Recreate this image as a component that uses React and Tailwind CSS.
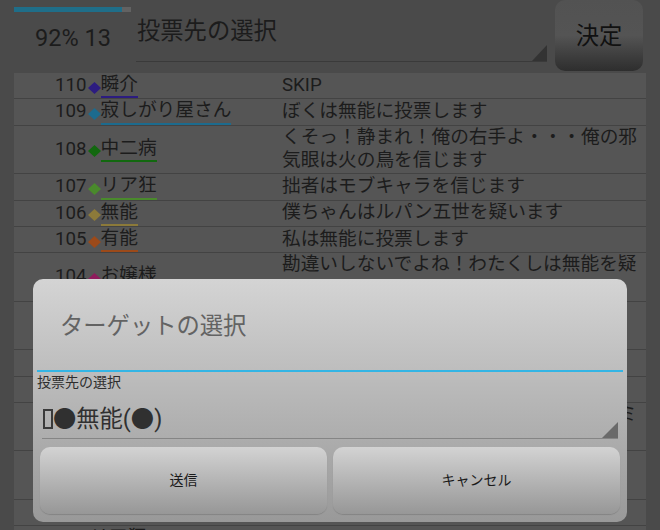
import React from "react";

const rows = [
  { n: 110, name: "瞬介", c: "#2c1c80", u: "border-[#2c1c80]", lines: ["SKIP"] },
  { n: 109, name: "寂しがり屋さん", c: "#1c6b8e", u: "border-[#1c6b8e]", lines: ["ぼくは無能に投票します"] },
  {
    n: 108,
    name: "中二病",
    c: "#12680f",
    u: "border-[#12680f]",
    lines: ["くそっ！静まれ！俺の右手よ・・・俺の邪", "気眼は火の鳥を信じます"],
  },
  { n: 107, name: "リア狂", c: "#4a8a2c", u: "border-[#4a8a2c]", lines: ["拙者はモブキャラを信じます"] },
  { n: 106, name: "無能", c: "#8c7a3a", u: "border-[#8c7a3a]", lines: ["僕ちゃんはルパン五世を疑います"] },
  { n: 105, name: "有能", c: "#9c4a1a", u: "border-[#9c4a1a]", lines: ["私は無能に投票します"] },
  {
    n: 104,
    name: "お嬢様",
    c: "#8e1c5c",
    u: "border-[#8e1c5c]",
    lines: ["勘違いしないでよね！わたくしは無能を疑", "っているわけじゃないんだからね！"],
  },
  {
    n: 103,
    name: "ルパン五世",
    c: "#6a2a8a",
    u: "border-[#6a2a8a]",
    lines: ["ふっふっふ、このルパン五世が華麗に", "有能を頂いていくぜ"],
  },
  { n: 102, name: "モブキャラ", c: "#5a5a1a", u: "border-[#5a5a1a]", lines: ["自分は寂しがり屋さんを信じます"] },
  { n: 101, name: "火の鳥", c: "#9a2a1a", u: "border-[#9a2a1a]", lines: ["私は中二病を疑います"] },
  {
    n: 100,
    name: "瞬介",
    c: "#2c1c80",
    u: "border-[#2c1c80]",
    lines: ["占いの結果は村人でした。皆さん信じてミ", "ンナで頑張りましょう"],
  },
  {
    n: 99,
    name: "寂しがり屋さん",
    c: "#1c6b8e",
    u: "border-[#1c6b8e]",
    lines: ["僕の推理では無能さんがとても怪しいよ、", "だから投票します"],
  },
  { n: null, name: "", c: "", u: "", lines: ["夜が明けました"] },
  { n: 97, name: "リア狂", c: "#4a8a2c", u: "border-[#4a8a2c]", lines: ["SKIP"] },
];

function Diamond({ color }) {
  return (
    <svg width="13" height="12" viewBox="0 0 13 12" className="ml-[1px] mt-[4px] shrink-0">
      <polygon points="6.5,0 13,6 6.5,12 0,6" fill={color} />
    </svg>
  );
}

function LogRow({ row }) {
  return (
    <div className="flex items-center border-b border-[#434343]">
      <div className="flex h-[25.4px] w-[268px] shrink-0 items-center pl-[41px] text-[18.7px]">
        {row.n && (
          <>
            <span className="leading-[23.4px]">{row.n}</span>
            <Diamond color={row.c} />
            <span className={`whitespace-nowrap border-b-2 leading-[23.4px] ${row.u}`}>{row.name}</span>
          </>
        )}
      </div>
      <div className="whitespace-nowrap text-[18.7px] leading-[23.7px]">
        {row.lines.map((l, i) => (
          <div key={i}>{l}</div>
        ))}
      </div>
    </div>
  );
}

export default function App() {
  return (
    <div className="relative h-[530px] w-[660px] overflow-hidden bg-[#4a4a4a] font-[Roboto,'Noto_Sans_CJK_JP',sans-serif] text-[#1c1c1c]">
      {/* header */}
      <div className="mx-[14px] flex h-[73px]">
        <div className="w-[122px] shrink-0">
          <div className="mt-[7px] h-[5px] w-[117px] bg-[#626262]">
            <div className="h-full w-[92%] bg-[#1f6e89]" />
          </div>
          <div className="mt-[12px] pl-[21px] text-[23.5px] leading-[28px]">92% 13</div>
        </div>
        <div className="relative mt-[14px] h-[48px] w-[411px] shrink-0 border-b border-[#3a3a3a]">
          <div className="pl-[1px] text-[23.3px] leading-[34px]">投票先の選択</div>
          <svg width="15" height="16" viewBox="0 0 15 16" className="absolute bottom-0 right-0">
            <polygon points="15,0 15,16 0,16" fill="#333333" />
          </svg>
        </div>
        <button className="ml-[8px] flex h-[71px] w-[88px] shrink-0 items-center justify-center rounded-[10px] bg-linear-to-b from-[#525252] via-[#545454] to-[#2e2e2e] text-[23.3px] leading-[34px] text-[#111111]">
          決定
        </button>
      </div>

      {/* log table */}
      <div className="mx-[14px] bg-[#555555]">
        {rows.map((r, i) => (
          <LogRow key={i} row={r} />
        ))}
      </div>

      {/* dialog */}
      <div className="absolute left-[33px] top-[279px] flex h-[243px] w-[594px] flex-col rounded-[10px] bg-linear-to-b from-[#d4d4d4] to-[#999999]">
        <div className="flex h-[91px] items-center pl-[27px] pt-[3px] text-[23.3px] leading-[34px] text-[#636363]">
          ターゲットの選択
        </div>
        <div className="mx-[4px] h-[2px] bg-[#33b5e5]" />
        <div className="pl-[4px] text-[14px] leading-[20px] text-[#2e2e2e]">投票先の選択</div>
        <div className="relative mx-[8.7px] border-b border-[#858585] pb-[4px] pl-[1.3px] pt-[11.5px]">
          <div className="flex items-center text-[23.3px] leading-[30px] text-[#303030]">
            <span className="inline-block h-[20px] w-[10px] border-2 border-[#3a3a3a]" />
            <span>●無能(●)</span>
          </div>
          <svg width="16" height="16" viewBox="0 0 16 16" className="absolute bottom-0 right-0">
            <polygon points="16,0 16,16 0,16" fill="#6a6a6a" />
          </svg>
        </div>
        <div className="mt-[8.7px] flex gap-[6px] px-[7px]">
          <button className="h-[67.3px] flex-1 rounded-[10px] bg-linear-to-b from-[#d3d3d3] to-[#979797] text-[14px] text-[#1a1a1a] shadow-[0_1px_1px_rgba(0,0,0,0.15)]">
            送信
          </button>
          <button className="h-[67.3px] flex-1 rounded-[10px] bg-linear-to-b from-[#d3d3d3] to-[#979797] text-[14px] text-[#1a1a1a] shadow-[0_1px_1px_rgba(0,0,0,0.15)]">
            キャンセル
          </button>
        </div>
      </div>
    </div>
  );
}
